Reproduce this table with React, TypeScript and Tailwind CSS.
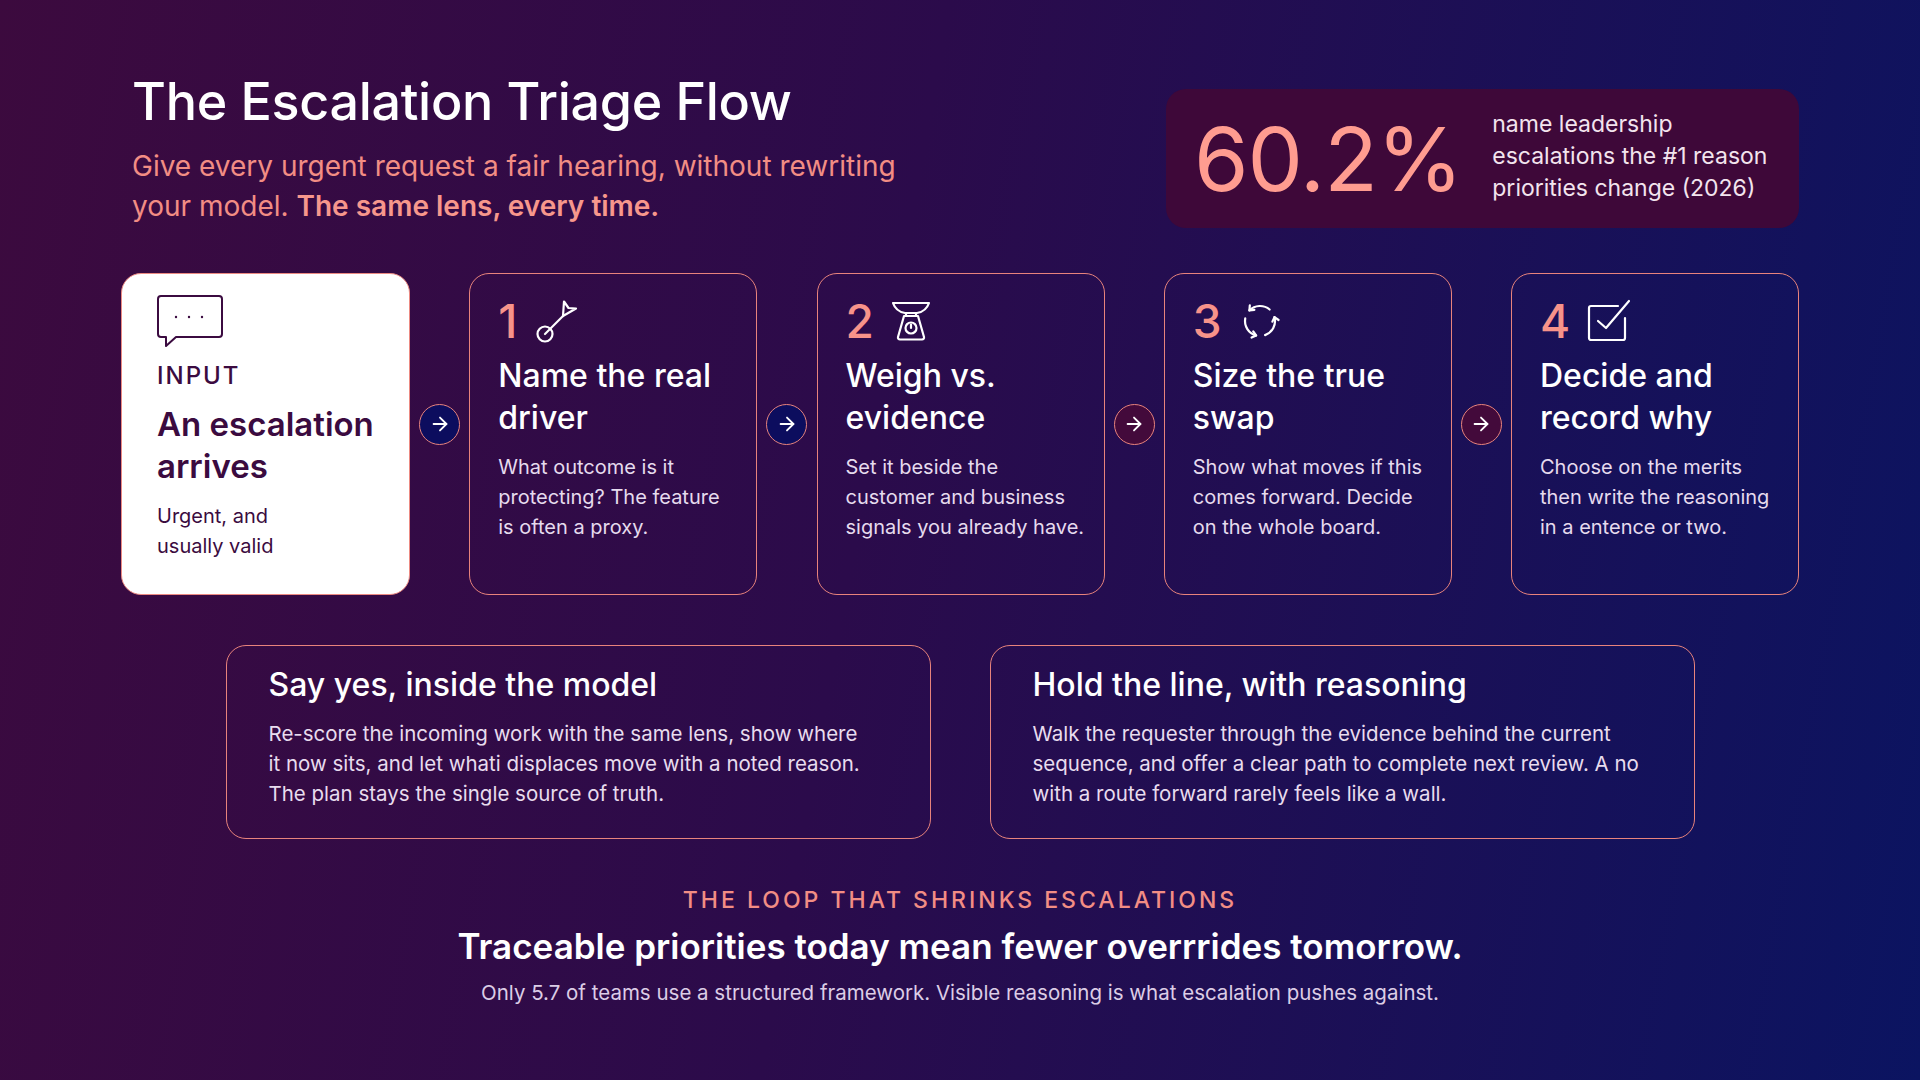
import { ArrowRight } from "lucide-react";
import type { ReactNode } from "react";

const ChatIcon = () => (
  <svg width="66" height="52" viewBox="0 0 66 52" fill="none" stroke="#3b0b40" strokeWidth="2" strokeLinejoin="round">
    <path d="M4 1 H62 a3 3 0 0 1 3 3 V39 a3 3 0 0 1 -3 3 H19 L9 51 V42 H4 a3 3 0 0 1 -3 -3 V4 a3 3 0 0 1 3 -3 Z" />
    <circle cx="19" cy="22" r="1.2" fill="#3b0b40" stroke="none" />
    <circle cx="32" cy="22" r="1.2" fill="#3b0b40" stroke="none" />
    <circle cx="45" cy="22" r="1.2" fill="#3b0b40" stroke="none" />
  </svg>
);

const DartIcon = () => (
  <svg width="44" height="46" viewBox="0 0 44 46" fill="none" stroke="white" strokeWidth="2.2" strokeLinecap="round" strokeLinejoin="round">
    <circle cx="11" cy="36" r="7.5" />
    <path d="M11 36 L29 18" />
    <path d="M29 18 L30 3.5 L34.5 10 L42 10.5 Z" />
  </svg>
);

const ScaleIcon = () => (
  <svg width="40" height="42" viewBox="0 0 40 42" fill="none" stroke="white" strokeWidth="2.2" strokeLinecap="round" strokeLinejoin="round">
    <path d="M2 3 H38 C36 9 32 12 26 13 H14 C8 12 4 9 2 3 Z" />
    <path d="M15 13 V16 M25 13 V16" />
    <path d="M13 16 H27 L33 37 a2 2 0 0 1 -2 2.5 H9 a2 2 0 0 1 -2 -2.5 Z" />
    <circle cx="20" cy="28" r="5.5" />
    <path d="M20 28 V24.5" />
  </svg>
);

const CycleIcon = () => (
  <svg width="42" height="42" viewBox="0 0 42 42" fill="none" stroke="white" strokeWidth="2.2" strokeLinecap="round" strokeLinejoin="round">
    <path d="M30.64 9.51 A15 15 0 0 0 10.39 10.39" />
    <path d="M15.37 9.95 L10.39 10.39 L10.83 5.41" />
    <path d="M6.23 18.4 A15 15 0 0 0 17.12 35.49" />
    <path d="M12.59 37.6 L17.12 35.49 L14.25 31.39" />
    <path d="M26.13 35.1 A15 15 0 0 0 35.49 17.12" />
    <path d="M39.59 19.99 L35.49 17.12 L33.38 21.65" />
  </svg>
);

const CheckIcon = () => (
  <svg width="44" height="44" viewBox="0 0 44 44" fill="none" stroke="white" strokeWidth="2.2" strokeLinecap="round" strokeLinejoin="round">
    <path d="M38 19 V39 a2 2 0 0 1 -2 2 H4 a2 2 0 0 1 -2 -2 V9 a2 2 0 0 1 2 -2 H31" />
    <path d="M11 22 L19 29 L42 2" />
  </svg>
);

const steps: { n: string; icon: ReactNode; title: ReactNode; body: ReactNode }[] = [
  {
    n: "1",
    icon: <DartIcon />,
    title: <>Name the real<br />driver</>,
    body: <>What outcome is it<br />protecting? The feature<br />is often a proxy.</>,
  },
  {
    n: "2",
    icon: <ScaleIcon />,
    title: <>Weigh vs.<br />evidence</>,
    body: <>Set it beside the<br />customer and business<br />signals you already have.</>,
  },
  {
    n: "3",
    icon: <CycleIcon />,
    title: <>Size the true<br />swap</>,
    body: <>Show what moves if this<br />comes forward. Decide<br />on the whole board.</>,
  },
  {
    n: "4",
    icon: <CheckIcon />,
    title: <>Decide and<br />record why</>,
    body: <>Choose on the merits<br />then write the reasoning<br />in a entence or two.</>,
  },
];

const arrowFills = ["bg-[#0c0d5e]", "bg-[#0c0d5e]", "bg-[#430a3b]", "bg-[#430a3b]"];

const Connector = ({ fill }: { fill: string }) => (
  <div className="flex-1 flex justify-center items-center pb-5">
    <div className={`w-[41px] h-[41px] rounded-full border border-[#e8837c] flex items-center justify-center ${fill}`}>
      <ArrowRight className="w-[22px] h-[22px] text-white" strokeWidth={2} />
    </div>
  </div>
);

const App = () => {
  return (
    <div className="w-[1920px] h-[1080px] overflow-hidden bg-[linear-gradient(100deg,#3c0a3e_0%,#2b0b4b_45%,#0b1461_100%)] font-['Inter',sans-serif] px-[121px] pt-[70px]">
      {/* header */}
      <div className="flex justify-between items-start">
        <div className="pl-[11px]">
          <h1 className="text-[52px] leading-[64px] font-medium text-white tracking-[-0.3px]">
            The Escalation Triage Flow
          </h1>
          <p className="mt-3 text-[28px] leading-[40px] text-[#f28d84]">
            Give every urgent request a fair hearing, without rewriting
            <br />
            your model. <span className="font-semibold text-[#f7978c]">The same lens, every time.</span>
          </p>
        </div>
        <div className="mt-[19px] w-[633px] h-[139px] rounded-[20px] bg-[#3e0839] flex items-center pl-7 gap-[30px]">
          <div className="text-[88px] leading-none text-[#ff9c90] tracking-[-1px]">60.2%</div>
          <div className="text-[23px] leading-[32px] text-[#f3e4ee] -mt-[6px]">
            name leadership
            <br />
            escalations the #1 reason
            <br />
            priorities change (2026)
          </div>
        </div>
      </div>

      {/* flow */}
      <div className="mt-[45px] flex items-center">
        <div className="w-[289px] h-[322px] shrink-0 rounded-[20px] bg-white border border-[#ec8a82] px-[35px] pt-[21px] text-[#3b0b40]">
          <ChatIcon />
          <div className="mt-[14px] text-[24px] leading-[30px] font-medium tracking-[2px]">INPUT</div>
          <div className="mt-3 text-[33px] leading-[42px] font-semibold whitespace-nowrap">
            An escalation
            <br />
            arrives
          </div>
          <div className="mt-[14px] text-[20px] leading-[30px]">
            Urgent, and
            <br />
            usually valid
          </div>
        </div>
        {steps.map((s, i) => (
          <div key={s.n} className="contents">
            <Connector fill={arrowFills[i]} />
            <div className="w-[288px] h-[322px] shrink-0 rounded-[20px] border border-[#e8837c] px-7 pt-[25px]">
              <div className="flex items-center gap-[17px] h-[44px]">
                <span className="text-[46px] leading-none font-medium text-[#f7938a]">{s.n}</span>
                {s.icon}
              </div>
              <div className="mt-3 text-[32px] leading-[42px] font-medium text-white whitespace-nowrap">{s.title}</div>
              <div className="mt-[13px] text-[20px] leading-[30px] text-[#e6dbee] whitespace-nowrap">{s.body}</div>
            </div>
          </div>
        ))}
      </div>

      {/* outcomes */}
      <div className="mt-[50px] flex justify-center gap-[59px]">
        <div className="w-[705px] h-[194px] rounded-[20px] border border-[#e8837c] pl-[42px] pt-[19px]">
          <div className="text-[32px] leading-[40px] font-medium text-white">Say yes, inside the model</div>
          <div className="mt-[14px] text-[20.5px] leading-[30px] text-[#e8dcee] whitespace-nowrap">
            Re-score the incoming work with the same lens, show where
            <br />
            it now sits, and let whati displaces move with a noted reason.
            <br />
            The plan stays the single source of truth.
          </div>
        </div>
        <div className="w-[705px] h-[194px] rounded-[20px] border border-[#e8837c] pl-[42px] pt-[19px]">
          <div className="text-[32px] leading-[40px] font-medium text-white">Hold the line, with reasoning</div>
          <div className="mt-[14px] text-[20.5px] leading-[30px] text-[#e8dcee] whitespace-nowrap">
            Walk the requester through the evidence behind the current
            <br />
            sequence, and offer a clear path to complete next review. A no
            <br />
            with a route forward rarely feels like a wall.
          </div>
        </div>
      </div>

      {/* closing */}
      <div className="mt-[47px] flex flex-col items-center text-center">
        <div className="text-[23px] leading-[28px] tracking-[3px] font-medium text-[#f28d84]">
          THE LOOP THAT SHRINKS ESCALATIONS
        </div>
        <div className="mt-3 text-[35px] leading-[40px] font-semibold text-white">
          Traceable priorities today mean fewer overrrides tomorrow.
        </div>
        <div className="mt-[13px] text-[20.5px] leading-[28px] text-[#dccde6]">
          Only 5.7 of teams use a structured framework. Visible reasoning is what escalation pushes against.
        </div>
      </div>
    </div>
  );
};

export default App;
